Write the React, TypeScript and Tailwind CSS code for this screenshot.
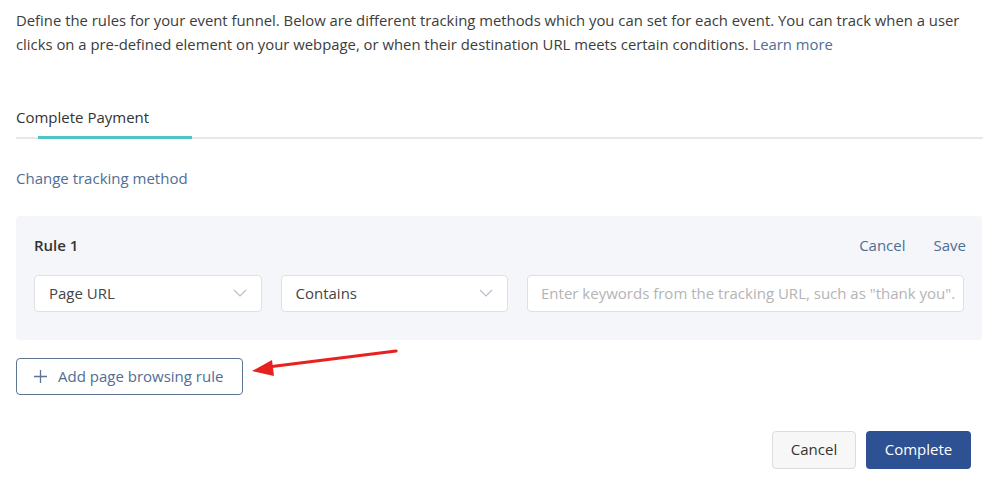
import React from 'react';

const ChevronDown: React.FC = () => (
  <svg width="14" height="8" viewBox="0 0 14 8" fill="none" stroke="#b8bec8" strokeWidth="1.2">
    <path d="M1 1l6 6 6-6" />
  </svg>
);

const App: React.FC = () => {
  return <div className="bg-white w-[987px] h-[484px] relative overflow-hidden text-[15px] text-[#333] font-['Segoe_UI','Open_Sans',sans-serif]">
      <div className="px-4 pt-[8px]">
        {/* Description */}
        <p className="leading-6 text-[14.85px] text-[#3c3c3c]">
          Define the rules for your event funnel. Below are different tracking methods which you can set for each event. You can track when a user<br />
          clicks on a pre-defined element on your webpage, or when their destination URL meets certain conditions. <span className="text-[#4f6e94]">Learn more</span>
        </p>

        {/* Tab */}
        <div className="mt-[50px] border-b-2 border-[#e6e8eb] w-[967px]">
          <div className="text-[#333] pb-[7px]">Complete Payment</div>
          <div className="ml-[22px] w-[154px] h-[3px] bg-[#4fc3c6] -mb-[2px]"></div>
        </div>

        <div className="mt-[28px] text-[#4f6e94]">Change tracking method</div>

        {/* Rule box */}
        <div className="mt-[27px] w-[966px] bg-[#f4f6f9] rounded px-[18px] pt-[18px] pb-[28px]">
          <div className="flex items-center justify-between">
            <span className="font-semibold text-[#333]">Rule 1</span>
            <div className="flex gap-[28px] text-[#4f6e94] -mr-[2px]">
              <span>Cancel</span>
              <span>Save</span>
            </div>
          </div>
          <div className="mt-[18px] flex gap-[19px]">
            <div className="w-[228px] h-[37px] bg-white border border-[#dde0e5] rounded flex items-center justify-between px-[14px] text-[#444]">
              <span>Page URL</span>
              <ChevronDown />
            </div>
            <div className="w-[228px] h-[37px] bg-white border border-[#dde0e5] rounded flex items-center justify-between px-[14px] text-[#444]">
              <span>Contains</span>
              <ChevronDown />
            </div>
            <div className="w-[438px] h-[37px] bg-white border border-[#dde0e5] rounded flex items-center px-[13px] text-[#b4b4b4] whitespace-nowrap overflow-hidden">
              Enter keywords from the tracking URL, such as "thank you".
            </div>
          </div>
        </div>

        {/* Add rule */}
        <button className="mt-[18px] w-[227px] h-[37px] border border-[#5d7590] rounded flex items-center pl-[17px] text-[#4f6e94]">
          <svg width="13" height="13" viewBox="0 0 13 13" stroke="#5d7590" strokeWidth="1.3" className="mr-[11px]">
            <path d="M6.5 0v13M0 6.5h13" />
          </svg>
          Add page browsing rule
        </button>

        {/* Footer */}
        <div className="mt-[36px] flex justify-end gap-[10px]">
          <button className="w-[84px] h-[38px] bg-[#f7f7f7] border border-[#dcdcdc] rounded text-[#333]">Cancel</button>
          <button className="w-[105px] h-[38px] bg-[#2d5193] rounded text-white">Complete</button>
        </div>
      </div>

      {/* Annotation arrow */}
      <svg className="absolute left-0 top-0 pointer-events-none" width="987" height="484">
        <line x1="396" y1="351" x2="268" y2="367" stroke="#e8201e" strokeWidth="3.2" strokeLinecap="round" />
        <path d="M252 371 L272 360 L274 376 Z" fill="#e8201e" />
      </svg>
    </div>;
};
export default App;
